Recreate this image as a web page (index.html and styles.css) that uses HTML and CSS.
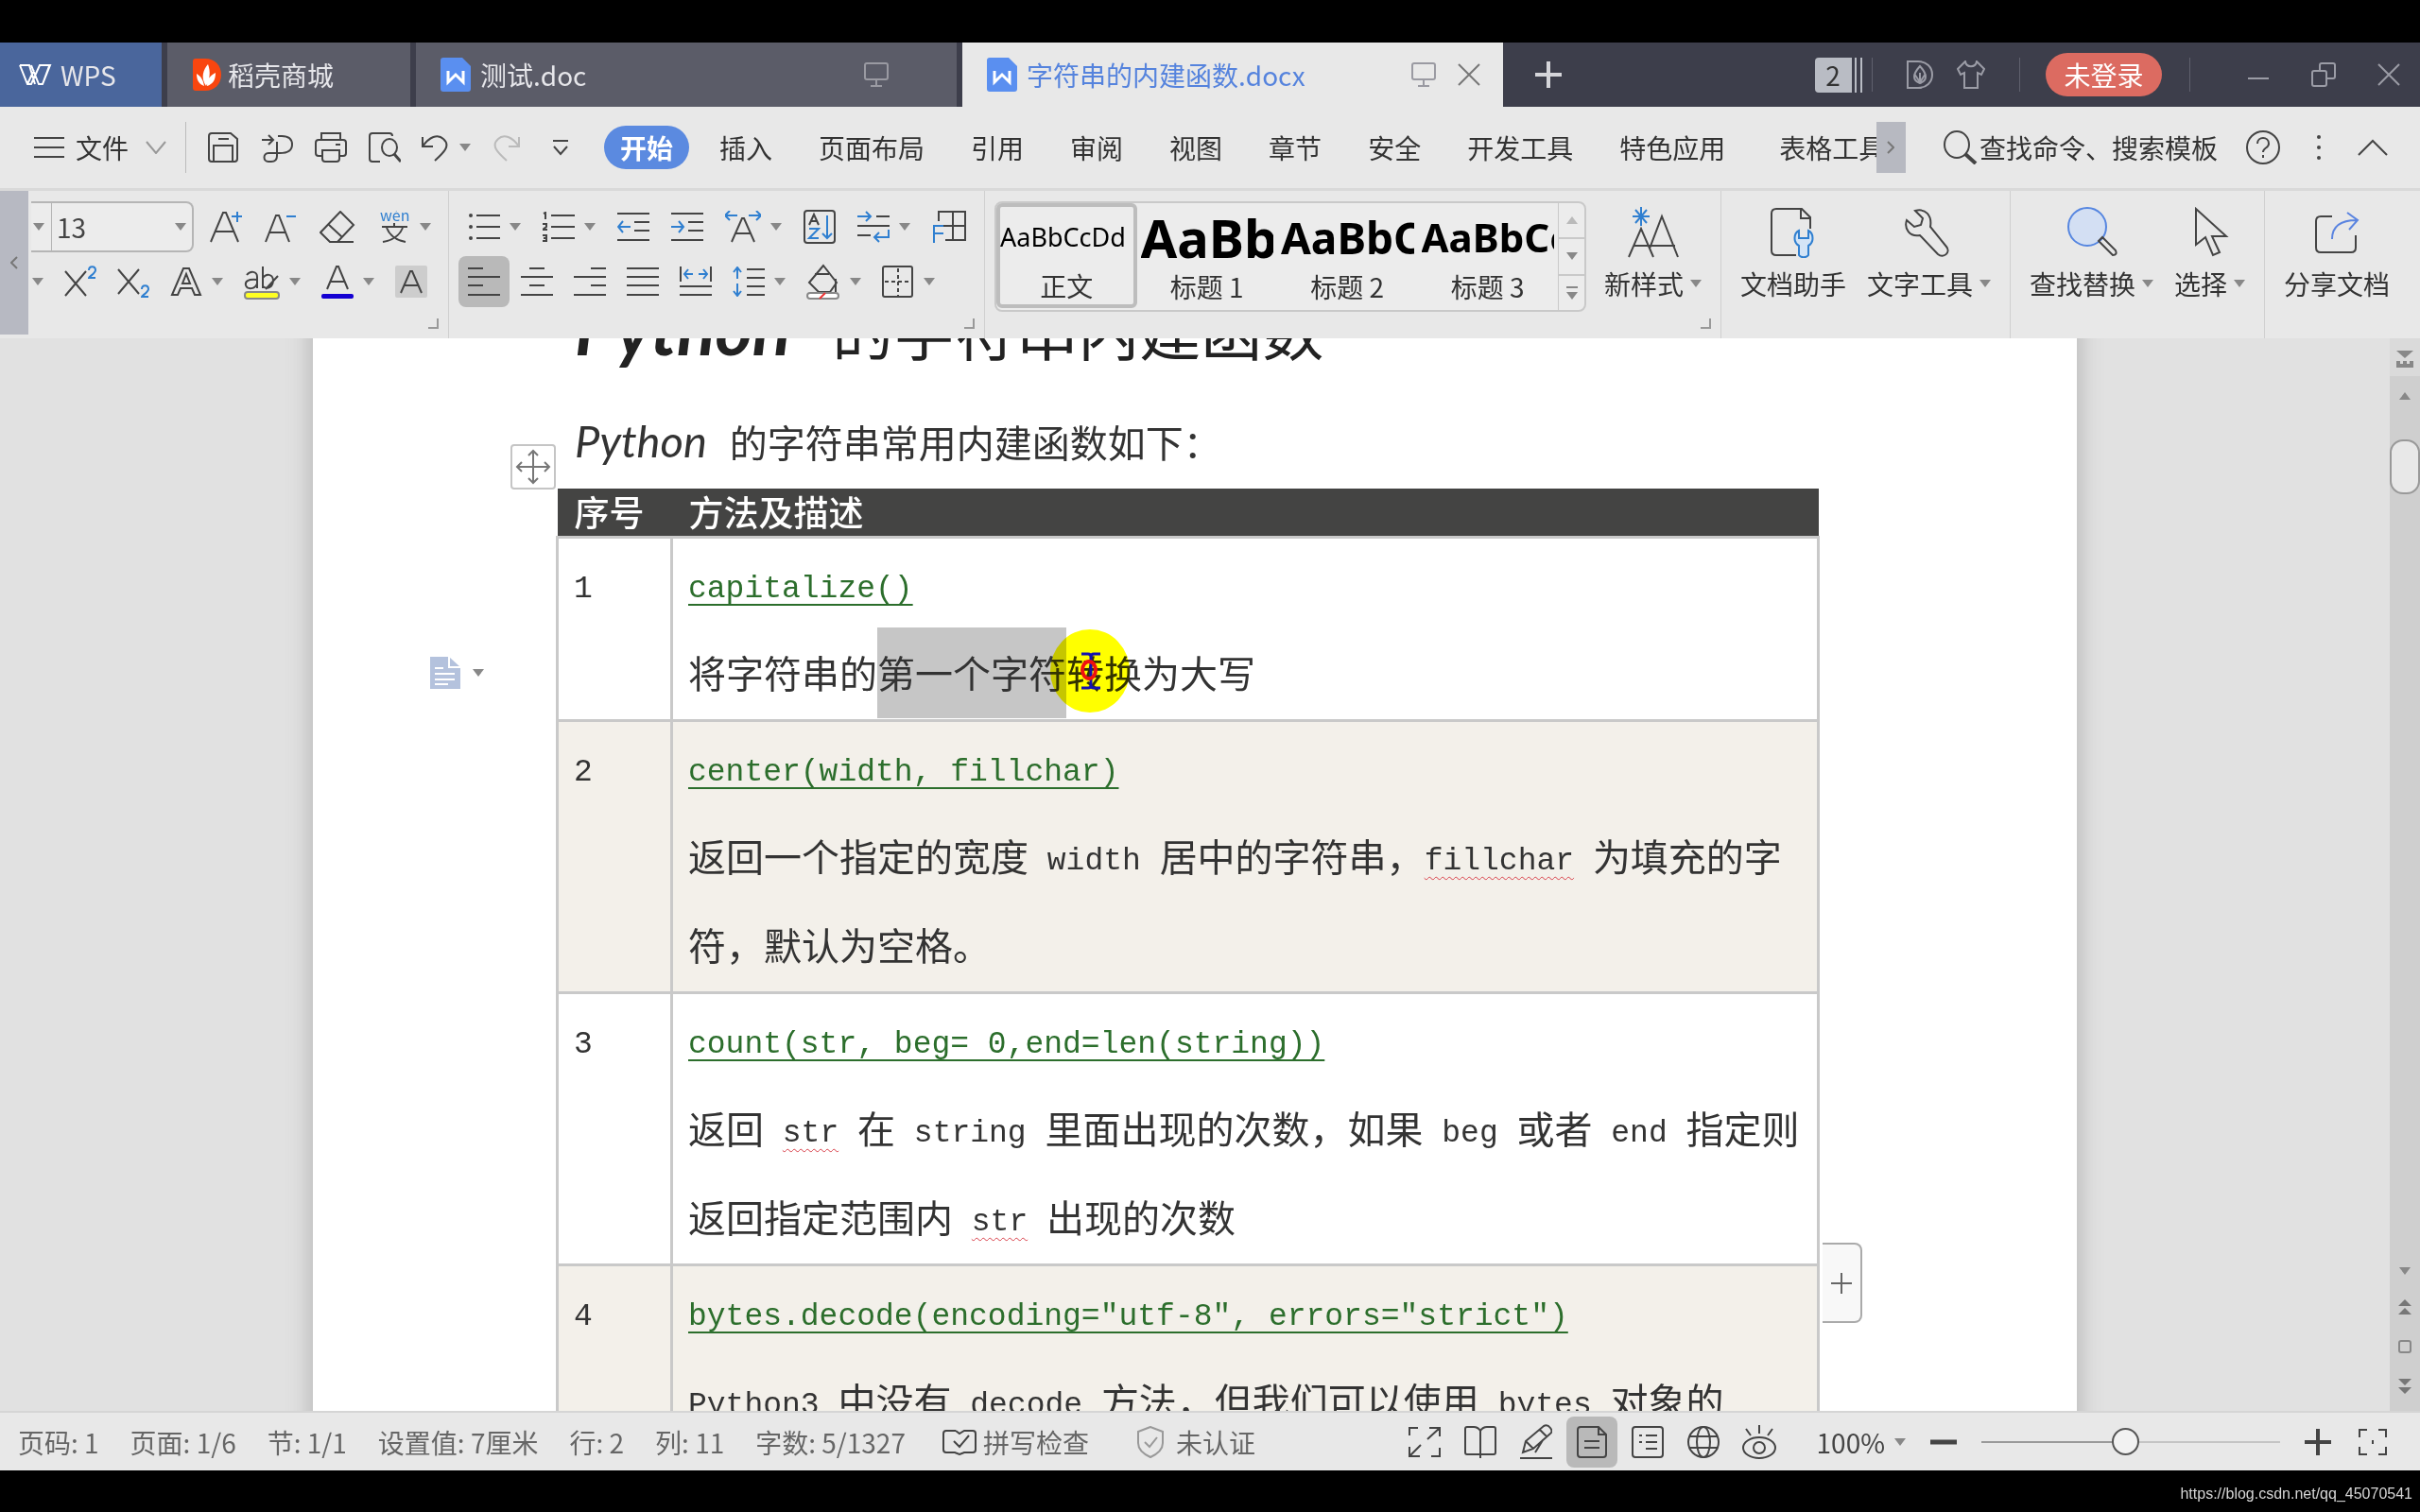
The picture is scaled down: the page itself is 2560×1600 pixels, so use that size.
FILE: index.html
```html
<!DOCTYPE html>
<html lang="zh-CN">

<head>
    <meta charset="UTF-8">
    <meta name="viewport" content="width=device-width, initial-scale=1.0">
    <title>字符串的内建函数.docx</title>
    <link rel="stylesheet" href="styles.css">
</head>

<body>
    <!-- 标签栏 -->
    <header class="tabbar">
        <button class="tab tab-wps">
            <svg width="36" height="26" viewBox="0 0 36 26"><path d="M2 3h10l6 20M2 3l8 20h4L23 3h11l-8 20h-4L14 3M10 23l7-15M26 23l7-19" /></svg>
            WPS
        </button>
        <button class="tab tab-store">
            <svg width="30" height="34" viewBox="0 0 30 34"><path d="M3 0h10c10 0 17 7 17 17s-7 17-17 17H3q-3 0-3-3V3q0-3 3-3z" fill="#f9460f" stroke="none" /><path d="M14 29C8 20 11 12 16 6c3 8 2 16-2 23zM12 29c-6-2-8-7-8-13 5 3 7 7 8 13zM15 29c0-7 3-11 9-14 0 8-3 12-9 14z" fill="#fff" stroke="none" /></svg>
            稻壳商城
        </button>
        <button class="tab tab-doc">
            <svg width="32" height="36" viewBox="0 0 32 36"><path d="M3 0h20l9 9v24q0 3-3 3H3q-3 0-3-3V3q0-3 3-3z" fill="#5a8ff0" stroke="none" /><path d="M8 14v12l8-8 8 8V14" stroke="#fff" stroke-width="3" /></svg>
            <span class="tab-name">测试.doc</span>
            <svg class="dim" width="26" height="26" viewBox="0 0 26 26"><rect x="1" y="1" width="24" height="17" rx="2" /><path d="M13 18v6M7 25h12" /></svg>
        </button>
        <button class="tab tab-doc active">
            <svg width="32" height="36" viewBox="0 0 32 36"><path d="M3 0h20l9 9v24q0 3-3 3H3q-3 0-3-3V3q0-3 3-3z" fill="#5a8ff0" stroke="none" /><path d="M8 14v12l8-8 8 8V14" stroke="#fff" stroke-width="3" /></svg>
            <span class="tab-name">字符串的内建函数.docx</span>
            <svg class="dim" width="26" height="26" viewBox="0 0 26 26"><rect x="1" y="1" width="24" height="17" rx="2" /><path d="M13 18v6M7 25h12" /></svg>
            <svg class="close" width="24" height="24" viewBox="0 0 24 24"><path d="M1 1l22 22M23 1L1 23" /></svg>
        </button>
        <button class="new-tab" aria-label="新建"><svg width="28" height="28" viewBox="0 0 28 28"><path d="M14 0v28M0 14h28" stroke-width="4" /></svg></button>
        <div class="window-tools">
            <span class="tab-count">2</span>
            <i class="line"></i>
            <button class="w-docer" aria-label="稻壳"><svg width="28" height="30" viewBox="0 0 28 30"><path d="M1 1h11c9 0 15 6 15 14s-6 14-15 14H1zM14 24c-8-3-8-9 0-18 8 9 8 15 0 18zM14 24V13M8 14l6 9M20 14l-6 9" /></svg></button>
            <button class="w-skin" aria-label="皮肤"><svg width="30" height="30" viewBox="0 0 30 30"><path d="M9 1L1 9l3 6 4-2v16h14V13l4 2 3-6-8-8c-1 7-11 7-12 0z" /></svg></button>
            <i class="line"></i>
            <button class="login">未登录</button>
            <i class="line"></i>
            <button class="w-min" aria-label="最小化"><svg width="22" height="26" viewBox="0 0 22 26"><path d="M0 17h22" /></svg></button>
            <button class="w-max" aria-label="还原"><svg width="26" height="26" viewBox="0 0 26 26"><path d="M9 9V3q0-2 2-2h12q2 0 2 2v12q0 2-2 2h-7" /><rect x="1" y="9" width="15" height="16" rx="2" /></svg></button>
            <button class="w-close" aria-label="关闭"><svg width="24" height="24" viewBox="0 0 24 24"><path d="M1 1l22 22M23 1L1 23" /></svg></button>
        </div>
    </header>

    <!-- 菜单栏 -->
    <nav class="menubar">
        <button class="file">
            <svg width="32" height="24" viewBox="0 0 32 24"><path d="M0 2h32M0 12h32M0 22h32" /></svg>
            文件
            <svg class="chev" width="22" height="14" viewBox="0 0 22 14"><path d="M1 1l10 12L21 1" stroke="#999" /></svg>
        </button>
        <div class="quick">
            <button aria-label="保存"><svg width="34" height="32" viewBox="0 0 34 32"><path d="M2 4q0-3 3-3h20l7 6v21q0 3-3 3H5q-3 0-3-3zM7 31V14h20v17M12 7h11" /></svg></button>
            <button aria-label="输出"><svg width="34" height="32" viewBox="0 0 34 32"><path d="M1 8h12M8 3l5 5-5 5M18 4h4c7 0 11 3 11 9s-5 9-13 9H8c-6 0-6 9 0 9h3c4 0 6-2 6-6V10" /></svg></button>
            <button aria-label="打印"><svg width="34" height="32" viewBox="0 0 34 32"><path d="M7 8V1h20v7M8 25H4q-3 0-3-3V11q0-3 3-3h26q3 0 3 3v11q0 3-3 3h-4M8 19h18v9q0 3-3 3H11q-3 0-3-3zM22 13h5" /></svg></button>
            <button aria-label="打印预览"><svg width="34" height="32" viewBox="0 0 34 32"><path d="M12 31H4q-3 0-3-3V4q0-3 3-3h18q3 0 3 3" /><ellipse cx="22" cy="16" rx="8" ry="9" /><path d="M27 23l7 8" stroke-width="3" /></svg></button>
            <button class="undo" aria-label="撤销"><svg width="30" height="32" viewBox="0 0 30 32"><path d="M2 5v10h11M2 15C9 5 18 1 24 7c8 7 1 14-9 23" /></svg><i class="caret"></i></button>
            <button aria-label="恢复"><svg class="off" width="30" height="32" viewBox="0 0 30 32"><path d="M28 5v10H17M28 15C21 5 12 1 6 7c-8 7-1 14 9 23" /></svg></button>
            <button aria-label="自定义"><svg width="18" height="18" viewBox="0 0 18 18"><path d="M1 2h16M2 8l7 8 7-8" /></svg></button>
        </div>
        <div class="menus">
            <button class="on">开始</button>
            <button>插入</button>
            <button>页面布局</button>
            <button>引用</button>
            <button>审阅</button>
            <button>视图</button>
            <button>章节</button>
            <button>安全</button>
            <button>开发工具</button>
            <button>特色应用</button>
            <button class="cut">表格工具</button>
        </div>
        <button class="menu-more" aria-label="更多"><svg width="8" height="14" viewBox="0 0 8 14"><path d="M1 1l6 6-6 6" stroke="#777" /></svg></button>
        <div class="menu-right">
            <button class="find"><svg width="36" height="36" viewBox="0 0 36 36"><ellipse cx="14" cy="15" rx="13" ry="14" /><path d="M23 25l11 10" stroke-width="4" /></svg>查找命令、搜索模板</button>
            <button aria-label="帮助"><svg width="36" height="36" viewBox="0 0 36 36"><circle cx="18" cy="18" r="17" /><path d="M12 14c0-8 12-8 12 0 0 5-6 4-6 9M18 26v3" /></svg></button>
            <button aria-label="选项"><svg width="6" height="28" viewBox="0 0 6 28"><g fill="#444" stroke="none"><circle cx="3" cy="3" r="2" /><circle cx="3" cy="14" r="2" /><circle cx="3" cy="25" r="2" /></g></svg></button>
            <button aria-label="收起功能区"><svg width="32" height="18" viewBox="0 0 32 18"><path d="M1 17L16 2l15 15" /></svg></button>
        </div>
    </nav>

    <!-- 功能区 -->
    <section class="ribbon">
        <button class="ribbon-back" aria-label="向左"><svg width="8" height="14" viewBox="0 0 8 14"><path d="M7 1L1 7l6 6" stroke="#777" /></svg></button>
        <div class="group font-group">
            <div class="tools row-size">
                <div class="size-box">
                    <i class="caret"></i>
                    <input type="text" value="13" aria-label="字号">
                    <i class="caret"></i>
                </div>
                <button aria-label="增大字号"><svg width="34" height="34" viewBox="0 0 34 34"><path d="M1 33L14 2h3l13 31M6 22h19" /><path class="blue" d="M29 1v11M23 6h11" /></svg></button>
                <button aria-label="减小字号"><svg width="34" height="34" viewBox="0 0 34 34"><path d="M1 33L12 5h3l11 28M5 23h17" /><path class="blue" d="M23 6h10" /></svg></button>
                <button aria-label="清除格式"><svg width="38" height="34" viewBox="0 0 38 34"><path d="M22 1L36 15 19 33h-8L1 23zM9 14l15 14M11 33h25" /></svg></button>
                <button aria-label="拼音指南"><svg width="34" height="34" viewBox="0 0 34 34"><text x="2" y="11" class="pinyin">wén</text><path d="M4 17h27M17 13v4M9 18c3 8 9 13 20 15M26 18c-3 8-10 13-21 15" /></svg><i class="caret"></i></button>
            </div>
            <div class="tools row-script">
                <i class="caret"></i>
                <button aria-label="上标"><svg width="34" height="34" viewBox="0 0 34 34"><path d="M1 6l22 26M23 6L1 32" /><path class="blue" d="M26 5c0-5 7-5 7 0 0 3-7 7-7 8h7" /></svg></button>
                <button aria-label="下标"><svg width="34" height="34" viewBox="0 0 34 34"><path d="M1 4l22 26M23 4L1 30" /><path class="blue" d="M26 25c0-5 7-5 7 0 0 3-7 7-7 8h7" /></svg></button>
                <button aria-label="文字效果"><svg width="34" height="34" viewBox="0 0 34 34"><path d="M2 31L14 3h6l12 28h-6l-3-7H11l-3 7zM13 19h8l-4-10z" /></svg><i class="caret"></i></button>
                <button aria-label="突出显示"><svg width="38" height="38" viewBox="0 0 38 38"><path d="M3 12c4-5 11-4 11 2v12M14 17C4 16 1 19 2 23c2 5 10 4 12-2M20 3v23M20 15c4-5 10-4 11 2 0 8-6 11-11 7M36 13L23 27" /><rect x="1" y="30" width="36" height="7" rx="3" fill="#ff2" stroke="#888" /></svg><i class="caret"></i></button>
                <button aria-label="字体颜色"><svg width="34" height="38" viewBox="0 0 34 38"><path d="M6 27L16 3h2l10 24M9 19h15" /><rect y="32" width="34" height="5" rx="2" fill="#1400d2" stroke="none" /></svg><i class="caret"></i></button>
                <button aria-label="字符底纹"><svg width="34" height="34" viewBox="0 0 34 34"><rect width="34" height="34" rx="2" fill="#cdcdcd" stroke="none" /><path d="M6 29L16 6h2l10 23M10 21h14" /></svg></button>
            </div>
            <i class="launcher"></i>
        </div>
        <div class="group para-group">
            <div class="tools row-list">
                <button aria-label="项目符号"><svg width="34" height="32" viewBox="0 0 34 32"><path d="M9 4h25M9 16h25M9 28h25" /><circle cx="3" cy="4" r="1" /><circle cx="3" cy="16" r="1" /><circle cx="3" cy="28" r="1" /></svg><i class="caret"></i></button>
                <button aria-label="编号"><svg width="34" height="32" viewBox="0 0 34 32"><path d="M9 4h25M9 16h25M9 28h25M1 2l2-1v7M0 13h4v3l-4 3h5M0 25h4v6H0M1 28h3" /></svg><i class="caret"></i></button>
                <button aria-label="减少缩进"><svg width="34" height="32" viewBox="0 0 34 32"><path d="M0 2h34M18 11h16M18 20h16M0 30h34" /><path class="blue" d="M14 16H1M6 10l-5 6 5 6" /></svg></button>
                <button aria-label="增加缩进"><svg width="34" height="32" viewBox="0 0 34 32"><path d="M0 2h34M18 11h16M18 20h16M0 30h34" /><path class="blue" d="M0 16h13M8 10l5 6-5 6" /></svg></button>
                <button aria-label="中文版式"><svg width="38" height="34" viewBox="0 0 38 34"><path d="M7 33L18 8h2l11 25M11 24h16" /><path class="blue" d="M0 5h13M5 0L0 5l5 5M25 5h13M33 0l5 5-5 5" /></svg><i class="caret"></i></button>
                <button aria-label="排序"><svg width="34" height="36" viewBox="0 0 34 36"><rect x="1" y="1" width="32" height="34" rx="3" /><path d="M6 16l5-11 5 11M8 12h6" /><path class="blue" d="M6 20h10L6 30h10M25 6v24M20 25l5 5 5-5" /></svg></button>
                <button aria-label="换行"><svg width="34" height="34" viewBox="0 0 34 34"><path d="M20 6h14M0 16h34M0 26h14" /><path class="blue" d="M0 6h14M9 1l5 5-5 5M33 20v8H18M23 23l-5 5 5 5" /></svg><i class="caret"></i></button>
                <button aria-label="制表位"><svg width="36" height="36" viewBox="0 0 36 36"><path d="M7 12V2h28v30H14M22 2v30M8 17h27" /><path class="blue" d="M2 35V17h10M2 25h10" /></svg></button>
            </div>
            <div class="tools row-align">
                <button class="pressed" aria-label="左对齐"><svg width="34" height="32" viewBox="0 0 34 32"><path d="M0 2h16M0 11h34M0 20h16M0 30h34" /></svg></button>
                <button aria-label="居中"><svg width="34" height="32" viewBox="0 0 34 32"><path d="M9 2h16M0 11h34M9 20h16M0 30h34" /></svg></button>
                <button aria-label="右对齐"><svg width="34" height="32" viewBox="0 0 34 32"><path d="M18 2h16M0 11h34M18 20h16M0 30h34" /></svg></button>
                <button aria-label="两端对齐"><svg width="34" height="32" viewBox="0 0 34 32"><path d="M0 2h34M0 11h34M0 20h34M0 30h34" /></svg></button>
                <button aria-label="分散对齐"><svg width="34" height="32" viewBox="0 0 34 32"><path d="M1 0v16M33 0v16M0 21h34M0 30h34" /><path class="blue" d="M5 8h9M9 3L5 8l4 5M20 8h9M25 3l4 5-4 5" /></svg></button>
                <button aria-label="行距"><svg width="34" height="32" viewBox="0 0 34 32"><path d="M15 3h19M15 12h19M15 21h19M15 30h19" /><path class="blue" d="M5 13V1M1 6l4-5 4 5M5 18v13M1 26l4 5 4-5" /></svg><i class="caret"></i></button>
                <button aria-label="底纹颜色"><svg width="36" height="38" viewBox="0 0 36 38"><path d="M18 2L3 20l10 10h12l7-10zM9 11h15M31 16v14" /><rect x="1" y="31" width="33" height="6" rx="3" fill="#fff" stroke="#888" /><path d="M14 37l6-6" stroke="#e33" /></svg><i class="caret"></i></button>
                <button aria-label="边框"><svg width="34" height="34" viewBox="0 0 34 34"><rect x="1" y="1" width="31" height="32" rx="2" /><path d="M17 3v29M3 17h29" stroke-dasharray="4 3" /></svg><i class="caret"></i></button>
            </div>
            <i class="launcher"></i>
        </div>
        <div class="group style-group">
            <div class="gallery">
                <button class="style picked"><span class="sample s0">AaBbCcDd</span>正文</button>
                <button class="style"><span class="sample s1">AaBb</span>标题 1</button>
                <button class="style"><span class="sample s2">AaBbC</span>标题 2</button>
                <button class="style"><span class="sample s3">AaBbCc</span>标题 3</button>
                <div class="gallery-scroll">
                    <button aria-label="上一行"><i class="caret up"></i></button>
                    <button aria-label="下一行"><i class="caret"></i></button>
                    <button class="expand" aria-label="展开"><i class="caret"></i></button>
                </div>
            </div>
            <button class="big">
                <svg width="54" height="54" viewBox="0 0 54 54"><path d="M1 53l13-30 13 30M6 41h44M23 44L36 10l17 43" /><path class="blue" d="M14 0v20M5 10h18M8 3l12 14M20 3L8 17" /></svg>
                <span>新样式<i class="caret"></i></span>
            </button>
            <i class="launcher"></i>
        </div>
        <div class="group">
            <button class="big">
                <svg width="54" height="54" viewBox="0 0 54 54"><path d="M30 51H9q-5 0-5-5V7q0-5 5-5h27l9 9v12M35 3v9h9" /><path class="blue" fill="#d3e4f6" d="M33 25c-6 3-6 13 0 16v10c2 3 8 3 10 0V41c6-3 6-13 0-16v8h-10z" /></svg>
                <span>文档助手</span>
            </button>
            <button class="big">
                <svg width="54" height="54" viewBox="0 0 54 54"><path d="M12 4l8 8-2 7-7 2-8-7c-3 9 3 18 14 16l19 20c6 5 14-2 9-8L28 21C30 9 23 1 12 4z" /></svg>
                <span>文字工具<i class="caret"></i></span>
            </button>
        </div>
        <div class="group">
            <button class="big">
                <svg width="54" height="54" viewBox="0 0 54 54"><circle cx="22" cy="21" r="20" fill="#d3dff3" stroke="#5686e0" /><path d="M34 36l4-4 14 14q2 5-3 5z" /></svg>
                <span>查找替换<i class="caret"></i></span>
            </button>
            <button class="big">
                <svg width="54" height="54" viewBox="0 0 54 54"><path d="M12 2v38l10-8 8 19 7-3-8-17h15z" /></svg>
                <span>选择<i class="caret"></i></span>
            </button>
        </div>
        <div class="group">
            <button class="big">
                <svg width="54" height="54" viewBox="0 0 54 54"><path d="M22 10H10q-5 0-5 5v28q0 5 5 5h32q5 0 5-5V30" /><path d="M22 34c0-13 9-20 26-20M38 6l11 8-9 10" stroke="#5a84e0" /></svg>
                <span>分享文档</span>
            </button>
        </div>
    </section>

    <!-- 文档区 -->
    <main class="workspace">
        <div class="desk">
            <article class="paper">
                <h1><em>Python</em>的字符串内建函数</h1>
                <p class="intro"><em>Python</em>的字符串常用内建函数如下：</p>
                <div class="table-area">
                    <span class="move-handle"><svg width="38" height="38" viewBox="0 0 38 38"><path d="M19 2v34M2 19h34M14 7l5-5 5 5M14 31l5 5 5-5M7 14l-5 5 5 5M31 14l5 5-5 5" stroke="#777" /></svg></span>
                    <span class="para-mark"><svg width="32" height="34" viewBox="0 0 32 34"><path d="M0 0h20l12 11v23H0z" fill="#b4c2dd" stroke="none" /><path d="M20 0v11h12M5 12h9M5 18h21M5 24h21M5 29h14" stroke="#fff" /></svg><i class="caret"></i></span>
                    <button class="add-col" aria-label="添加列"><svg width="22" height="22" viewBox="0 0 22 22"><path d="M11 0v22M0 11h22" stroke="#666" /></svg></button>
                    <table>
                        <thead>
                            <tr>
                                <th class="no">序号</th>
                                <th>方法及描述</th>
                            </tr>
                        </thead>
                        <tbody>
                            <tr>
                                <td><code>1</code></td>
                                <td><a href="#"><code>capitalize()</code></a><br>将字符串的<mark>第一个字符</mark><span class="pointer-at">转<svg class="pointer" width="86" height="90" viewBox="0 0 86 90"><ellipse cx="43" cy="45" rx="42" ry="44" fill="#ff0" stroke="none" /></svg><svg class="ibeam" width="24" height="40" viewBox="0 0 24 40"><path d="M2 2h7q3 0 3 3v30q0 3-3 3H2M22 2h-7q-3 0-3 3M22 38h-7q-3 0-3-3" stroke="#1410b0" stroke-width="3" /><ellipse cx="10" cy="19" rx="7" ry="9" stroke="#f01010" stroke-width="4" /></svg></span>换为大写</td>
                            </tr>
                            <tr>
                                <td><code>2</code></td>
                                <td><a href="#"><code>center(width, fillchar)</code></a><br>返回一个指定的宽度<code> width </code>居中的字符串，<code class="typo">fillchar</code><code> </code>为填充的字<br>符，默认为空格。</td>
                            </tr>
                            <tr>
                                <td><code>3</code></td>
                                <td><a href="#"><code>count(str, beg= 0,end=len(string))</code></a><br>返回<code> </code><code class="typo">str</code><code> </code>在<code> string </code>里面出现的次数，如果<code> beg </code>或者<code> end </code>指定则<br>返回指定范围内<code> </code><code class="typo">str</code><code> </code>出现的次数</td>
                            </tr>
                            <tr>
                                <td><code>4</code></td>
                                <td><a href="#"><code>bytes.decode(encoding="utf-8", errors="strict")</code></a><br><code>Python3 </code>中没有<code> decode </code>方法，但我们可以使用<code> bytes </code>对象的</td>
                            </tr>
                        </tbody>
                    </table>
                </div>
            </article>
        </div>
        <aside class="scroll">
            <svg class="ruler" width="32" height="40" viewBox="0 0 32 40"><path d="M7 13h18l-9 8zM7 24h4v3h3v-3h4v3h3v-3h4v7H7z" fill="#888" stroke="none" /></svg>
            <i class="caret up"></i>
            <i class="thumb"></i>
            <div class="scroll-end">
                <i class="caret"></i>
                <svg width="16" height="18" viewBox="0 0 16 18"><path d="M1 8l7-7 7 7zM1 17l7-7 7 7z" fill="#777" stroke="none" /></svg>
                <svg width="16" height="16" viewBox="0 0 16 16"><rect x="2" y="2" width="12" height="12" rx="2" stroke="#888" /></svg>
                <svg width="16" height="18" viewBox="0 0 16 18"><path d="M1 1l7 7 7-7zM1 10l7 7 7-7z" fill="#777" stroke="none" /></svg>
            </div>
        </aside>
    </main>

    <!-- 状态栏 -->
    <footer class="status">
        <div class="counts">
            <span>页码: 1</span>
            <span>页面: 1/6</span>
            <span>节: 1/1</span>
            <span>设置值: 7厘米</span>
            <span>行: 2</span>
            <span>列: 11</span>
            <span>字数: 5/1327</span>
            <button><svg width="36" height="28" viewBox="0 0 36 28"><path d="M14 2H4q-3 0-3 3v17q0 3 3 3h9l5 2 5-2h9q3 0 3-3V5q0-3-3-3h-9l-5 3-4-3M12 13l6 6 10-12" /></svg>拼写检查</button>
            <button class="cert"><svg width="28" height="34" viewBox="0 0 28 34"><path d="M14 1L1 6v12q0 9 13 15 13-6 13-15V6zM8 17l5 5 8-10" stroke="#999" /></svg>未认证</button>
        </div>
        <div class="views">
            <button aria-label="全屏"><svg width="34" height="32" viewBox="0 0 34 32"><path d="M1 9V1h9M22 1h11v9M33 1L20 13M33 22v9h-9M12 31H1V21M1 31l12-12" /></svg></button>
            <button aria-label="阅读"><svg width="34" height="34" viewBox="0 0 34 34"><path d="M17 5c-2-3-4-4-7-4H3q-2 0-2 2v25q0 2 2 2h14zM17 5c2-3 4-4 7-4h7q2 0 2 2v25q0 2-2 2H17v4" /></svg></button>
            <button aria-label="写作"><svg width="34" height="38" viewBox="0 0 34 38"><path d="M3 30l3-12L25 2q4-2 7 2t0 6L14 26zM21 6l7 7M6 18l8 8M24 17l-8 13M0 36h34" /></svg></button>
            <button class="pressed" aria-label="页面视图"><svg width="34" height="34" viewBox="0 0 34 34"><path d="M5 1h19l8 8v21q0 3-3 3H5q-3 0-3-3V4q0-3 3-3zM24 1v8h8M9 16h16M9 23h16" /></svg></button>
            <button aria-label="大纲"><svg width="34" height="34" viewBox="0 0 34 34"><rect x="1" y="1" width="32" height="32" rx="3" /><path d="M8 10h3M15 10h12M8 17h3M15 17h12M15 24h12" /></svg></button>
            <button aria-label="Web 版式"><svg width="34" height="34" viewBox="0 0 34 34"><circle cx="17" cy="17" r="16" /><ellipse cx="17" cy="17" rx="7" ry="16" /><path d="M3 11h28M3 23h28" /></svg></button>
            <button aria-label="护眼"><svg width="38" height="38" viewBox="0 0 38 38"><path d="M19 1v9M5 5l5 7M33 5l-5 7" /><ellipse cx="19" cy="25" rx="17" ry="11" /><circle cx="19" cy="25" r="6" /></svg></button>
        </div>
        <div class="zoom">
            <button class="percent">100%<i class="caret"></i></button>
            <button aria-label="缩小"><svg width="28" height="28" viewBox="0 0 28 28"><path d="M0 14h28" stroke-width="5" /></svg></button>
            <input type="range" min="0" max="100" value="48" aria-label="缩放">
            <button aria-label="放大"><svg width="28" height="28" viewBox="0 0 28 28"><path d="M14 0v28M0 14h28" stroke-width="4" /></svg></button>
            <button class="fit" aria-label="适合窗口"><svg width="30" height="28" viewBox="0 0 30 28"><path d="M1 9V1h8M21 1h8v8M29 19v8h-8M9 27H1v-8M15 12v4" /></svg></button>
        </div>
    </footer>
    <div class="credit">https://blog.csdn.net/qq_45070541</div>
</body>

</html>
```

FILE: styles.css
```css
* {
    box-sizing: border-box;
}

body {
    margin: 0;
    padding-top: 45px;
    height: 100vh;
    display: flex;
    flex-direction: column;
    overflow: hidden;
    background-color: #000;
    color: #333;
    font-family: "Noto Sans CJK SC", "Noto Sans", sans-serif;
    font-size: 28px;
    line-height: 40px;
}

button {
    display: flex;
    align-items: center;
    justify-content: center;
    flex-shrink: 0;
    padding: 0;
    border: 0;
    background: none;
    color: inherit;
    font: inherit;
    white-space: nowrap;
}

svg {
    flex-shrink: 0;
    fill: none;
    stroke: #444;
    stroke-width: 2;
}

.blue {
    stroke: #2f7fd0;
}

.caret {
    flex-shrink: 0;
    border: 6px solid transparent;
    border-top: 8px solid #888;
    border-bottom: 0;
}

.caret.up {
    border-top: 0;
    border-bottom: 8px solid #888;
}

/* 标签栏 */
.tabbar {
    display: flex;
    flex-shrink: 0;
    height: 68px;
    gap: 6px;
    background-color: #3d3e4b;
    color: #e6e6ea;
}

.tab {
    justify-content: flex-start;
    background-color: #5b5c68;
}

.tab-wps {
    width: 171px;
    padding-left: 19px;
    gap: 9px;
    background-color: #4a669c;
}

.tab-wps svg {
    stroke: #fff;
}

.tab-store {
    width: 257px;
    padding-left: 27px;
    gap: 7px;
}

.tab-doc {
    width: 572px;
    padding: 0 72px 0 26px;
    gap: 10px;
}

.tab-name {
    flex: 1;
    text-align: left;
}

.tab-doc .dim {
    stroke: #9a9aa2;
}

.tab-doc.active {
    padding-right: 24px;
    background-color: #e8e8e8;
    color: #5583dd;
}

.tab-doc .close {
    margin-left: 13px;
    stroke: #777;
}

.new-tab {
    margin-left: 28px;
}

.new-tab svg {
    stroke: #d5d5da;
}

.window-tools {
    display: flex;
    align-items: center;
    margin-left: auto;
    padding-right: 21px;
}

.window-tools svg {
    stroke: #9b9ca6;
}

.tab-count {
    width: 50px;
    height: 37px;
    padding-right: 10px;
    border-right: 2px solid #b9bcc4;
    background: linear-gradient(to right, #b9bcc4 39px, #3d3e4b 39px, #3d3e4b 42px, #b9bcc4 42px, #b9bcc4 44px, #3d3e4b 44px);
    border-radius: 4px 0 0 4px;
    color: #333;
    line-height: 37px;
    text-align: center;
}

.line {
    width: 1px;
    height: 36px;
    margin-left: 10px;
    background-color: #5f606d;
}

.w-docer {
    margin: 0 25px 0 36px;
}

.w-skin {
    margin-right: 26px;
}

.login {
    width: 123px;
    height: 46px;
    margin: 0 19px 0 27px;
    border-radius: 23px;
    background-color: #dc6b61;
    color: #fff;
}

.w-min {
    margin: 0 45px 0 61px;
}

.w-max {
    margin-right: 44px;
}

/* 菜单栏 */
.menubar {
    display: flex;
    flex-shrink: 0;
    align-items: center;
    height: 89px;
    border-bottom: 3px solid #d9d9d9;
    background-color: #e8e8e8;
}

.file {
    height: 54px;
    padding: 0 20px 0 36px;
    gap: 12px;
    border-right: 1px solid #bbb;
}

.file .chev {
    margin-left: 6px;
}

.quick {
    display: flex;
    padding-left: 10px;
}

.quick button {
    width: 57px;
}

.quick .undo {
    width: 72px;
    gap: 11px;
}

.quick .off {
    stroke: #bbb;
}

.menus {
    display: flex;
    flex: 1;
    gap: 15px;
    min-width: 0;
    margin-left: 18px;
    overflow: hidden;
}

.menus button {
    height: 46px;
    padding: 0 17px;
}

.menus .on {
    border-radius: 23px;
    background-color: #5b8ae0;
    color: #fff;
    font-weight: bold;
}

.menus .cut {
    margin-left: 8px;
}

.menu-more {
    width: 31px;
    height: 54px;
    background-color: #b7b9c1;
}

.menu-right {
    display: flex;
    align-items: center;
    padding: 0 34px 0 40px;
    gap: 38px;
}

.find {
    gap: 2px;
    margin-right: -8px;
}

/* 功能区 */
.ribbon {
    display: flex;
    flex-shrink: 0;
    height: 156px;
    background-color: #e8e8e8;
}

.ribbon-back {
    width: 30px;
    height: 152px;
    background-color: #b7b9c2;
}

.group {
    position: relative;
    display: flex;
    gap: 22px;
    padding: 11px 20px 0;
    border-left: 1px solid #d0d0d0;
}

.group:last-child {
    flex: 1;
}

.font-group,
.para-group {
    flex-direction: column;
    gap: 4px;
}

.font-group {
    width: 444px;
    padding-left: 3px;
    border-left: 0;
}

.para-group {
    width: 567px;
    padding-right: 0;
}

.tools {
    display: flex;
    align-items: center;
    height: 54px;
}

.tools .caret {
    margin-left: 10px;
}

.row-size {
    gap: 24px;
}

.row-size button:nth-child(2) {
    margin-left: -7px;
}

.row-script,
.row-align {
    gap: 22px;
}

.tools.row-script > .caret {
    margin-left: 1px;
}

.row-list {
    gap: 23px;
}

.size-box {
    display: flex;
    align-items: center;
    width: 172px;
    height: 54px;
    padding-right: 6px;
    border: 2px solid #b5b5b5;
    border-left: 0;
    border-radius: 0 8px 8px 0;
    background-color: #ececec;
}

.size-box .caret {
    margin-left: 2px;
}

.size-box input {
    flex: 1;
    min-width: 0;
    height: 50px;
    margin-left: 7px;
    padding: 0 0 0 5px;
    border: 0;
    border-left: 1px solid #b5b5b5;
    background: none;
    color: #444;
    font: inherit;
}

.pinyin {
    fill: #2f7fd0;
    stroke: none;
    font-size: 16px;
}

.row-align .pressed {
    width: 54px;
    height: 54px;
    margin: 0 -10px;
}

.pressed {
    border-radius: 8px;
    background-color: #b9b9b9;
}

.launcher {
    position: absolute;
    right: 10px;
    bottom: 10px;
    width: 11px;
    height: 11px;
    border: solid #999;
    border-width: 0 2px 2px 0;
}

.style-group {
    padding-left: 10px;
    gap: 19px;
}

.gallery {
    display: flex;
    width: 626px;
    height: 117px;
    border: 2px solid #c9c9c9;
    border-radius: 8px;
    background-color: #ececec;
}

.style {
    flex: 1;
    flex-direction: column;
    justify-content: flex-start;
    min-width: 0;
    height: 111px;
    padding: 4px 4px 0;
    overflow: hidden;
}

.style.picked {
    border: 4px solid #bdbdbd;
    border-radius: 6px;
    padding: 0;
}

.sample {
    align-self: stretch;
    height: 64px;
    overflow: hidden;
    color: #000;
    font-family: "Noto Sans", sans-serif;
    line-height: 64px;
    text-align: left;
}

.s0 {
    font-size: 27px;
}

.s1,
.s2,
.s3 {
    font-weight: bold;
}

.s1 {
    font-size: 56px;
}

.s2 {
    font-size: 46px;
}

.s3 {
    font-size: 42px;
}

.gallery-scroll {
    display: flex;
    flex-direction: column;
    width: 28px;
    border-left: 1px solid #c9c9c9;
}

.gallery-scroll button {
    flex: 1;
}

.gallery-scroll button + button {
    border-top: 2px solid #c9c9c9;
}

.gallery-scroll .up {
    opacity: 0.5;
}

.expand {
    flex-direction: column;
    gap: 4px;
}

.expand::before {
    content: "";
    width: 12px;
    height: 2px;
    background-color: #888;
}

.big {
    flex-direction: column;
    justify-content: flex-start;
    height: 120px;
    padding-top: 6px;
    gap: 7px;
}

.big span {
    display: flex;
    align-items: center;
    gap: 7px;
}

/* 文档区 */
.workspace {
    display: flex;
    flex: 1;
    min-height: 0;
}

.desk {
    flex: 1;
    overflow: hidden;
    background-color: #e1e1e1;
}

.paper {
    width: 1866px;
    margin: 0 auto;
    padding: 0 272px 0 277px;
    background-color: #fff;
    box-shadow: 0 0 20px 6px #bfbfbf;
}

/* 文档已向下滚动，标题露出下半部分 */
h1 {
    margin: 0;
    margin-top: -50px;
    font-size: 65px;
    font-weight: 400;
    line-height: 80px;
    color: #222;
}

.intro {
    margin: 0;
    padding: 32px 0 3px;
    font-size: 40px;
    line-height: 94px;
}

em {
    font-family: Lato, sans-serif;
    line-height: 1;
}

h1 em {
    margin-right: 44px;
    font-size: 75px;
    font-weight: bold;
}

.intro em {
    margin-right: 24px;
    font-size: 47px;
}

.table-area {
    position: relative;
    margin: 0 0 0 -20px;
}

table {
    width: 100%;
    border-collapse: collapse;
    table-layout: fixed;
    font-size: 40px;
    line-height: 94px;
    white-space: nowrap;
}

th {
    height: 51px;
    padding: 0 18px;
    background-color: #444443;
    color: #fff;
    font-size: 37px;
    font-weight: 500;
    line-height: 49px;
    text-align: left;
}

.no {
    width: 121px;
}

td {
    padding: 0 16px 3px;
    border: 3px solid #c9c9c9;
    vertical-align: top;
}

tbody tr:nth-child(even) {
    background-color: #f3f0ea;
}

code {
    font-family: "Liberation Mono", monospace;
    font-size: 33px;
    line-height: 1;
    vertical-align: 2px;
    white-space: pre;
}

a {
    color: #2c6e2c;
    text-decoration: none;
}

a code {
    text-decoration: underline 2px;
    text-underline-offset: 7px;
}

.typo {
    text-decoration: underline wavy #d8404a 1px;
    text-underline-offset: 7px;
}

mark {
    padding: 18px 0 20px;
    background-color: #c6c6c6;
    color: inherit;
}

.pointer-at {
    position: relative;
}

.pointer {
    position: absolute;
    left: -18px;
    top: -17px;
    mix-blend-mode: multiply;
}

.ibeam {
    position: absolute;
    left: 14px;
    top: 8px;
}

.move-handle {
    position: absolute;
    left: -48px;
    top: -47px;
    display: flex;
    align-items: center;
    justify-content: center;
    width: 48px;
    height: 48px;
    border: 2px solid #c5c5c5;
    border-radius: 4px;
    background-color: #fff;
}

.para-mark {
    position: absolute;
    left: -133px;
    top: 178px;
    display: flex;
    align-items: center;
    gap: 13px;
}

.add-col {
    position: absolute;
    right: -45px;
    top: 798px;
    width: 42px;
    height: 85px;
    border: 2px solid #aaa;
    border-left: 0;
    border-radius: 0 8px 8px 0;
    background-color: #f8f8f8;
}

.scroll {
    display: flex;
    flex-direction: column;
    align-items: center;
    width: 32px;
    padding-bottom: 17px;
    background-color: #cfcfcf;
}

.ruler {
    margin-bottom: 17px;
    background-color: #dadada;
}

.thumb {
    width: 32px;
    height: 58px;
    margin-top: 42px;
    border: 2px solid #999;
    border-radius: 14px;
    background-color: #e8e8e8;
}

.scroll-end {
    display: flex;
    flex-direction: column;
    align-items: center;
    gap: 25px;
    margin-top: auto;
}

/* 状态栏 */
.status {
    display: flex;
    flex-shrink: 0;
    align-items: center;
    height: 63px;
    padding: 0 35px 0 19px;
    border-top: 2px solid #d5d5d5;
    background-color: #e8e8e8;
    color: #666;
}

.counts,
.views,
.zoom {
    display: flex;
    align-items: center;
}

.counts {
    gap: 33px;
    white-space: nowrap;
}

.counts button {
    margin-left: 6px;
    gap: 7px;
}

.counts .cert {
    margin-left: 18px;
    gap: 13px;
}

.views {
    margin-left: auto;
    gap: 5px;
}

.views button {
    width: 54px;
    height: 54px;
}

.zoom {
    margin-left: 34px;
    gap: 26px;
    color: #444;
}

.percent {
    gap: 10px;
}

.fit {
    margin-left: 3px;
}

input[type="range"] {
    appearance: none;
    width: 316px;
    height: 30px;
    margin: 0;
    background: linear-gradient(to right, #999 48%, #c4c4c4 48%) center / 100% 2px no-repeat;
}

input[type="range"]::-webkit-slider-thumb {
    appearance: none;
    width: 29px;
    height: 29px;
    border: 2px solid #555;
    border-radius: 50%;
    background-color: #f2f2f2;
}

.credit {
    flex-shrink: 0;
    height: 44px;
    padding-right: 8px;
    color: #d5d5d5;
    font-family: "Liberation Sans", sans-serif;
    font-size: 16px;
    line-height: 50px;
    text-align: right;
}
```
